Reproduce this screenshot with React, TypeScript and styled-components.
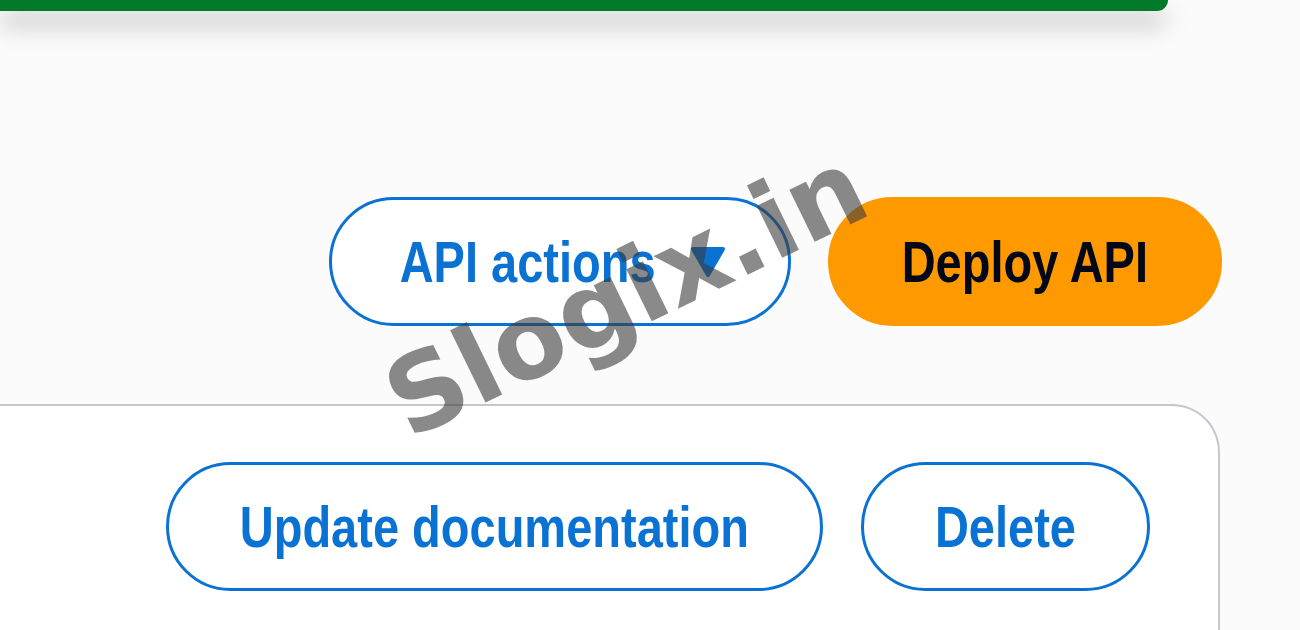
import React from 'react';
import { createGlobalStyle, styled } from 'styled-components';

const GlobalStyle = createGlobalStyle`
  html, body {
    margin: 0;
    padding: 0;
    background: #fbfbfb;
  }
  body {
    font-family: "Liberation Sans", Arial, sans-serif;
    overflow: hidden;
  }
`;

const Page = styled.div`
  position: relative;
  width: 1300px;
  height: 630px;
  overflow: hidden;
  background: #fbfbfb;
`;

const FlashBar = styled.div`
  width: 1168px;
  height: 11px;
  background: #037a2a;
  border-bottom-right-radius: 12px;
  box-shadow: 0 14px 24px rgba(0, 0, 0, 0.28);
`;

const HeaderActions = styled.div`
  display: flex;
  justify-content: flex-end;
  gap: 37px;
  margin-top: 186px;
  padding-right: 78px;
`;

const Pill = styled.button<{ $primary?: boolean; $dropdown?: boolean }>`
  display: inline-flex;
  align-items: center;
  justify-content: center;
  gap: 34px;
  box-sizing: border-box;
  height: 129px;
  padding: 0 ${(p) => (p.$dropdown ? '62px' : '71px')} 0 ${(p) => (p.$dropdown ? '68px' : '71px')};
  border-radius: 65px;
  border: 3px solid ${(p) => (p.$primary ? '#ff9900' : '#0972d3')};
  background: ${(p) => (p.$primary ? '#ff9900' : '#ffffff')};
  color: ${(p) => (p.$primary ? '#000716' : '#0972d3')};
  font-family: inherit;
  font-size: 47px;
  font-weight: 700;
  line-height: 1;
  white-space: nowrap;
  cursor: pointer;
`;

// the screenshot is stretched vertically, so the label is too
const Label = styled.span`
  display: inline-block;
  transform: scaleY(1.24);
`;

const Card = styled.div`
  margin-top: 78px;
  margin-right: 80px;
  height: 300px;
  box-sizing: border-box;
  background: #ffffff;
  border-top: 2.5px solid #c6c6cd;
  border-right: 2.5px solid #c6c6cd;
  border-top-right-radius: 48px;
`;

const CardActions = styled.div`
  display: flex;
  justify-content: flex-end;
  gap: 38px;
  padding: 56px 68px 0 0;
`;

const Watermark = styled.div`
  position: absolute;
  left: 626px;
  top: 294px;
  transform: translate(-50%, -50%) rotate(-26deg);
  font-family: "DejaVu Sans", sans-serif;
  font-weight: 700;
  font-size: 106px;
  line-height: 1;
  color: rgba(60, 60, 60, 0.6);
  white-space: nowrap;
  pointer-events: none;
`;

function Caret(): React.ReactElement {
  return (
    <svg width="36" height="32" viewBox="0 0 36 32" aria-hidden="true">
      <path d="M3 3 L33 3 L18 29 Z" fill="#0972d3" stroke="#0972d3" strokeWidth="4" strokeLinejoin="round" />
    </svg>
  );
}

export default function App(): React.ReactElement {
  return (
    <Page>
      <GlobalStyle />
      <FlashBar />
      <HeaderActions>
        <Pill $dropdown>
          <Label>API actions</Label>
          <Caret />
        </Pill>
        <Pill $primary>
          <Label>Deploy API</Label>
        </Pill>
      </HeaderActions>
      <Card>
        <CardActions>
          <Pill>
            <Label>Update documentation</Label>
          </Pill>
          <Pill>
            <Label>Delete</Label>
          </Pill>
        </CardActions>
      </Card>
      <Watermark>Slogix.in</Watermark>
    </Page>
  );
}
